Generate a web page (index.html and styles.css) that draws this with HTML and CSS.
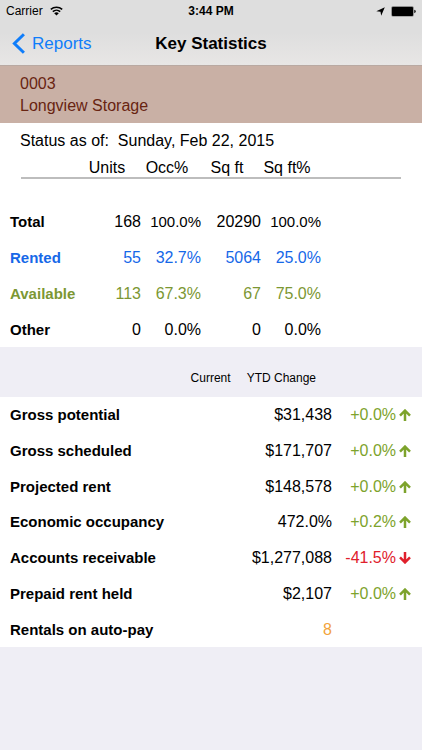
FILE: index.html
```
<!DOCTYPE html>
<html lang="en">
<head>
<meta charset="utf-8">
<meta name="viewport" content="width=device-width, initial-scale=1">
<title>Key Statistics</title>
<link rel="stylesheet" href="styles.css">
</head>
<body>
<svg width="0" height="0" class="sprite" aria-hidden="true">
  <symbol id="arrow" viewBox="0 0 12 12">
    <path d="M6 12V1.6M1 6.6L6 1.6l5 5" fill="none" stroke="currentColor" stroke-width="2.5"/>
  </symbol>
</svg>
<header class="top">
  <div class="status">
    <span class="carrier">Carrier
      <svg width="13" height="10" viewBox="0 0 13 10" aria-hidden="true">
        <path d="M.8 3.4a8.4 8.4 0 0 1 11.4 0M2.8 5.6a5.4 5.4 0 0 1 7.4 0" fill="none" stroke="#000" stroke-width="1.5"/>
        <path d="M6.5 9.6L4.2 7.2a3.4 3.4 0 0 1 4.6 0z"/>
      </svg>
    </span>
    <span class="clock">3:44 PM</span>
    <span class="power">
      <svg width="9" height="9" viewBox="0 0 9 9" aria-hidden="true"><path d="M8.8.3L5.2 8.7 4.5 4.7.3 4.2z"/></svg>
      <svg width="25" height="11" viewBox="0 0 25 11" aria-hidden="true">
        <rect x=".3" y=".3" width="22.4" height="10.2" rx="1.5" fill="#777"/>
        <rect x="1" y="1" width="21" height="9" rx="1"/>
        <path d="M23.3 3.8q1.4.3 1.4 1.7t-1.4 1.7z"/>
      </svg>
    </span>
  </div>
  <nav class="nav">
    <a class="back" href="#">
      <svg width="13" height="21" viewBox="0 0 13 21" aria-hidden="true"><path d="M11.9 1.2L2.4 10.5l9.5 9.3" fill="none" stroke="currentColor" stroke-width="3"/></svg>
      Reports
    </a>
    <h1>Key Statistics</h1>
  </nav>
</header>
<main>
  <section class="site">
    <p>0003</p>
    <p>Longview Storage</p>
  </section>
  <table class="units">
    <caption>Status as of:&nbsp; Sunday, Feb 22, 2015</caption>
    <colgroup><col class="name"><col class="num"><col class="num"><col class="num"><col class="num"><col></colgroup>
    <thead>
      <tr><td></td><th scope="col">Units</th><th scope="col">Occ%</th><th scope="col">Sq ft</th><th scope="col">Sq ft%</th><td></td></tr>
    </thead>
    <tbody>
      <tr><th scope="row">Total</th><td>168</td><td class="full">100.0%</td><td>20290</td><td class="full">100.0%</td><td></td></tr>
      <tr class="rented"><th scope="row">Rented</th><td>55</td><td>32.7%</td><td>5064</td><td>25.0%</td><td></td></tr>
      <tr class="available"><th scope="row">Available</th><td>113</td><td>67.3%</td><td>67</td><td>75.0%</td><td></td></tr>
      <tr><th scope="row">Other</th><td>0</td><td>0.0%</td><td>0</td><td>0.0%</td><td></td></tr>
    </tbody>
  </table>
  <div class="legend"><span>Current</span><span>YTD Change</span></div>
  <table class="money">
    <colgroup><col><col class="current"><col class="change"><col class="trend"></colgroup>
    <tbody>
      <tr><th scope="row">Gross potential</th><td>$31,438</td><td class="up">+0.0%</td><td class="up"><svg class="arrow"><use href="#arrow"/></svg></td></tr>
      <tr><th scope="row">Gross scheduled</th><td>$171,707</td><td class="up">+0.0%</td><td class="up"><svg class="arrow"><use href="#arrow"/></svg></td></tr>
      <tr><th scope="row">Projected rent</th><td>$148,578</td><td class="up">+0.0%</td><td class="up"><svg class="arrow"><use href="#arrow"/></svg></td></tr>
      <tr><th scope="row">Economic occupancy</th><td>472.0%</td><td class="up">+0.2%</td><td class="up"><svg class="arrow"><use href="#arrow"/></svg></td></tr>
      <tr><th scope="row">Accounts receivable</th><td>$1,277,088</td><td class="down">-41.5%</td><td class="down"><svg class="arrow"><use href="#arrow"/></svg></td></tr>
      <tr><th scope="row">Prepaid rent held</th><td>$2,107</td><td class="up">+0.0%</td><td class="up"><svg class="arrow"><use href="#arrow"/></svg></td></tr>
      <tr><th scope="row">Rentals on auto-pay</th><td class="autopay">8</td><td></td><td></td></tr>
    </tbody>
  </table>
</main>
</body>
</html>
```
FILE: styles.css
```
* { box-sizing: border-box; }
body {
  margin: 0;
  min-height: 100vh;
  background: #efeef5;
  color: #000;
  font: 16px/22px "Liberation Sans", Arial, sans-serif;
}
.sprite { position: absolute; }
h1, p { margin: 0; }

.top {
  background: linear-gradient(#dedede 50%, #e8e6e5);
  border-bottom: 1px solid #b9a9a2;
}
.status, .nav {
  display: grid;
  grid-template-columns: 1fr auto 1fr;
  align-items: center;
}
.status {
  height: 22px;
  padding: 0 6px;
  font-size: 12px;
}
.carrier, .power, .back {
  display: flex;
  align-items: center;
}
.carrier { gap: 7px; }
.clock { font-weight: bold; }
.power { justify-content: flex-end; gap: 6px; }
.nav {
  height: 43px;
  padding: 0 12px;
}
.back {
  gap: 7px;
  color: #0f7dfa;
  font-size: 17px;
  text-decoration: none;
}
h1 { font-size: 17px; }

.site {
  padding: 7px 20px 6px;
  background: #c9b0a5;
  color: #682411;
}

table {
  width: 100%;
  table-layout: fixed;
  border-collapse: collapse;
  background: #fff;
}
th, td { padding: 0; text-align: right; }
tbody th, tbody td { padding-top: 1px; }
tbody th {
  padding-left: 10px;
  font-size: 15px;
  text-align: left;
  white-space: nowrap;
}

.units { height: 190px; }
.units caption {
  padding: 7px 20px 5px;
  background: #fff;
  text-align: left;
}
.name { width: 81px; }
.num { width: 60px; }
thead { position: relative; }
thead tr { height: 46px; }
thead th {
  padding: 0 8px 0 0;
  font-weight: normal;
  text-align: center;
  white-space: nowrap;
  vertical-align: top;
}
thead::after {
  content: "";
  position: absolute;
  top: 20px;
  left: 21px;
  right: 21px;
  height: 2px;
  background: #bdbdbd;
}
.full { font-size: 15px; }
.rented { color: #1668e8; }
.available { color: #7c9733; }

.legend {
  display: flex;
  justify-content: flex-end;
  gap: 16px;
  padding: 20px 106px 8px;
  font-size: 12px;
}

.money { height: 250px; }
.current { width: 100px; }
.change { width: 64px; }
.trend { width: 26px; }
.up { color: #7da32c; }
.down { color: #e0202c; }
.autopay { color: #f2a33c; }
.arrow {
  display: block;
  width: 12px;
  height: 12px;
  margin-left: 3px;
}
.down .arrow { transform: rotate(180deg); }
```
